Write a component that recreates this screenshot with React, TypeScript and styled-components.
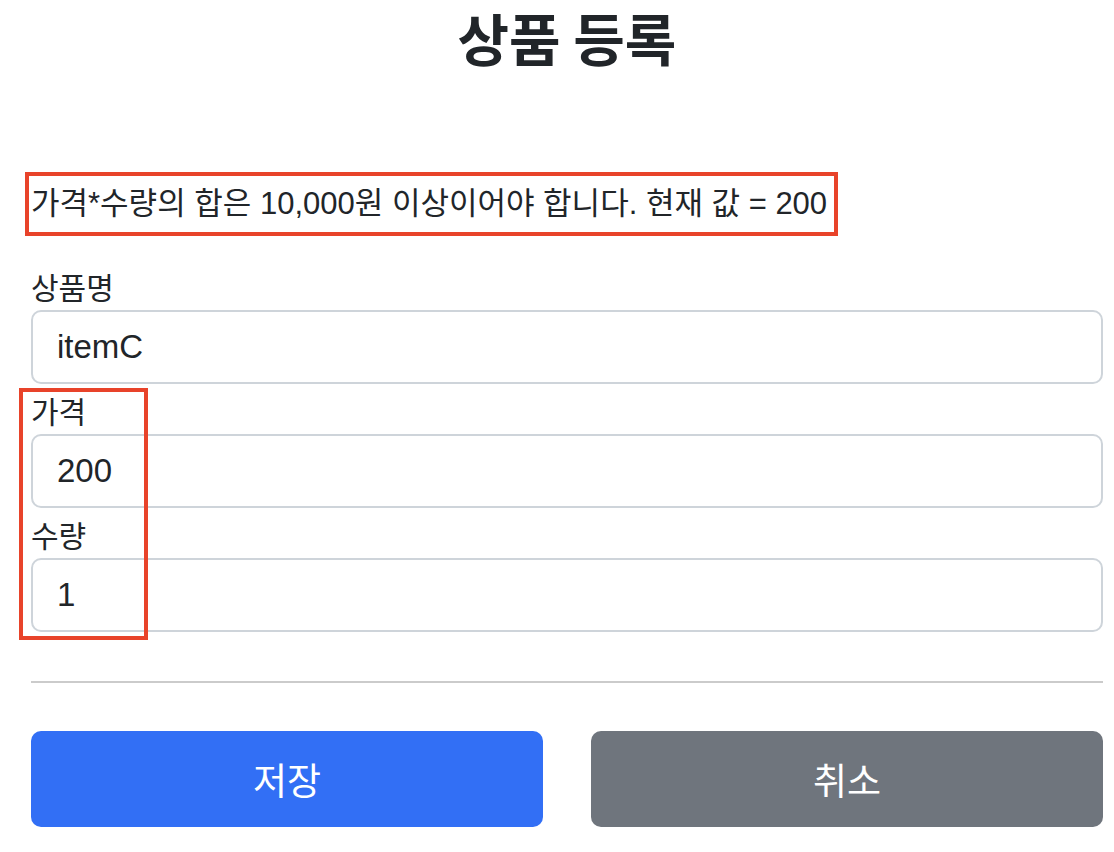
import * as React from "react";
import styled, { createGlobalStyle } from "styled-components";

const GlobalStyle = createGlobalStyle`
    html, body {
        margin: 0;
        background: #ffffff;
    }

    body {
        font-family: "Liberation Sans", "Noto Sans CJK KR", sans-serif;
        color: #212529;
    }
`;

const Page = styled.div`
    padding: 0 11px 0 31px;
`;

const Title = styled.h2`
    margin: 0;
    line-height: 74px;
    text-align: center;
    font-size: 56px;
    font-weight: 700;
    font-family: "Noto Sans CJK KR", sans-serif;
`;

const Form = styled.form`
    display: flex;
    flex-direction: column;
    padding-top: 98px;
`;

const ErrorBox = styled.div`
    align-self: flex-start;
    margin-left: -6px;
    padding: 0 7px 0 2px;
    border: 4px solid #e8432a;
    height: 56px;
    line-height: 56px;
    font-size: 31px;
    white-space: nowrap;
`;

const Fields = styled.div`
    display: flex;
    flex-direction: column;
    padding-top: 30px;
`;

const Highlight = styled.div`
    position: relative;
`;

const HighlightFrame = styled.div`
    position: absolute;
    left: -12px;
    top: 4px;
    width: 121px;
    height: 244px;
    border: 4px solid #e8432a;
    pointer-events: none;
`;

const Group = styled.div<{ $first?: boolean }>`
    display: flex;
    flex-direction: column;
    padding-top: ${(p) => (p.$first ? 0 : 6)}px;
`;

const Label = styled.label`
    height: 40px;
    line-height: 40px;
    margin-bottom: 4px;
    font-size: 30px;
    font-family: "Noto Sans CJK KR", sans-serif;
`;

const Input = styled.input`
    box-sizing: border-box;
    width: 100%;
    height: 74px;
    padding: 0 24px;
    border: 2px solid #ced4da;
    border-radius: 10px;
    font-size: 33px;
    font-family: "Liberation Sans", "Noto Sans CJK KR", sans-serif;
    color: #212529;
    background: #ffffff;
    outline: none;
`;

const Divider = styled.hr`
    margin: 49px 0 48px;
    border: 0;
    border-top: 2px solid #cbcbcb;
`;

const Buttons = styled.div`
    display: grid;
    grid-template-columns: 1fr 1fr;
    gap: 48px;
`;

const Button = styled.button<{ $variant: "primary" | "secondary" }>`
    height: 96px;
    border: 0;
    border-radius: 10px;
    color: #ffffff;
    font-size: 37px;
    font-family: "Noto Sans CJK KR", sans-serif;
    background: ${(p) => (p.$variant === "primary" ? "#326ff5" : "#6f757d")};
`;

interface FieldProps {
    label: string;
    value: string;
    first?: boolean;
}

const Field: React.FC<FieldProps> = ({ label, value, first }) => (
    <Group $first={first}>
        <Label>{label}</Label>
        <Input defaultValue={value} />
    </Group>
);

export default function App() {
    return (
        <Page>
            <GlobalStyle />
            <Title>상품 등록</Title>
            <Form onSubmit={(e) => e.preventDefault()}>
                <ErrorBox>가격*수량의 합은 10,000원 이상이어야 합니다. 현재 값 = 200</ErrorBox>
                <Fields>
                    <Field first label="상품명" value="itemC" />
                    <Highlight>
                        <HighlightFrame />
                        <Field label="가격" value="200" />
                        <Field label="수량" value="1" />
                    </Highlight>
                </Fields>
                <Divider />
                <Buttons>
                    <Button type="submit" $variant="primary">저장</Button>
                    <Button type="button" $variant="secondary">취소</Button>
                </Buttons>
            </Form>
        </Page>
    );
}
